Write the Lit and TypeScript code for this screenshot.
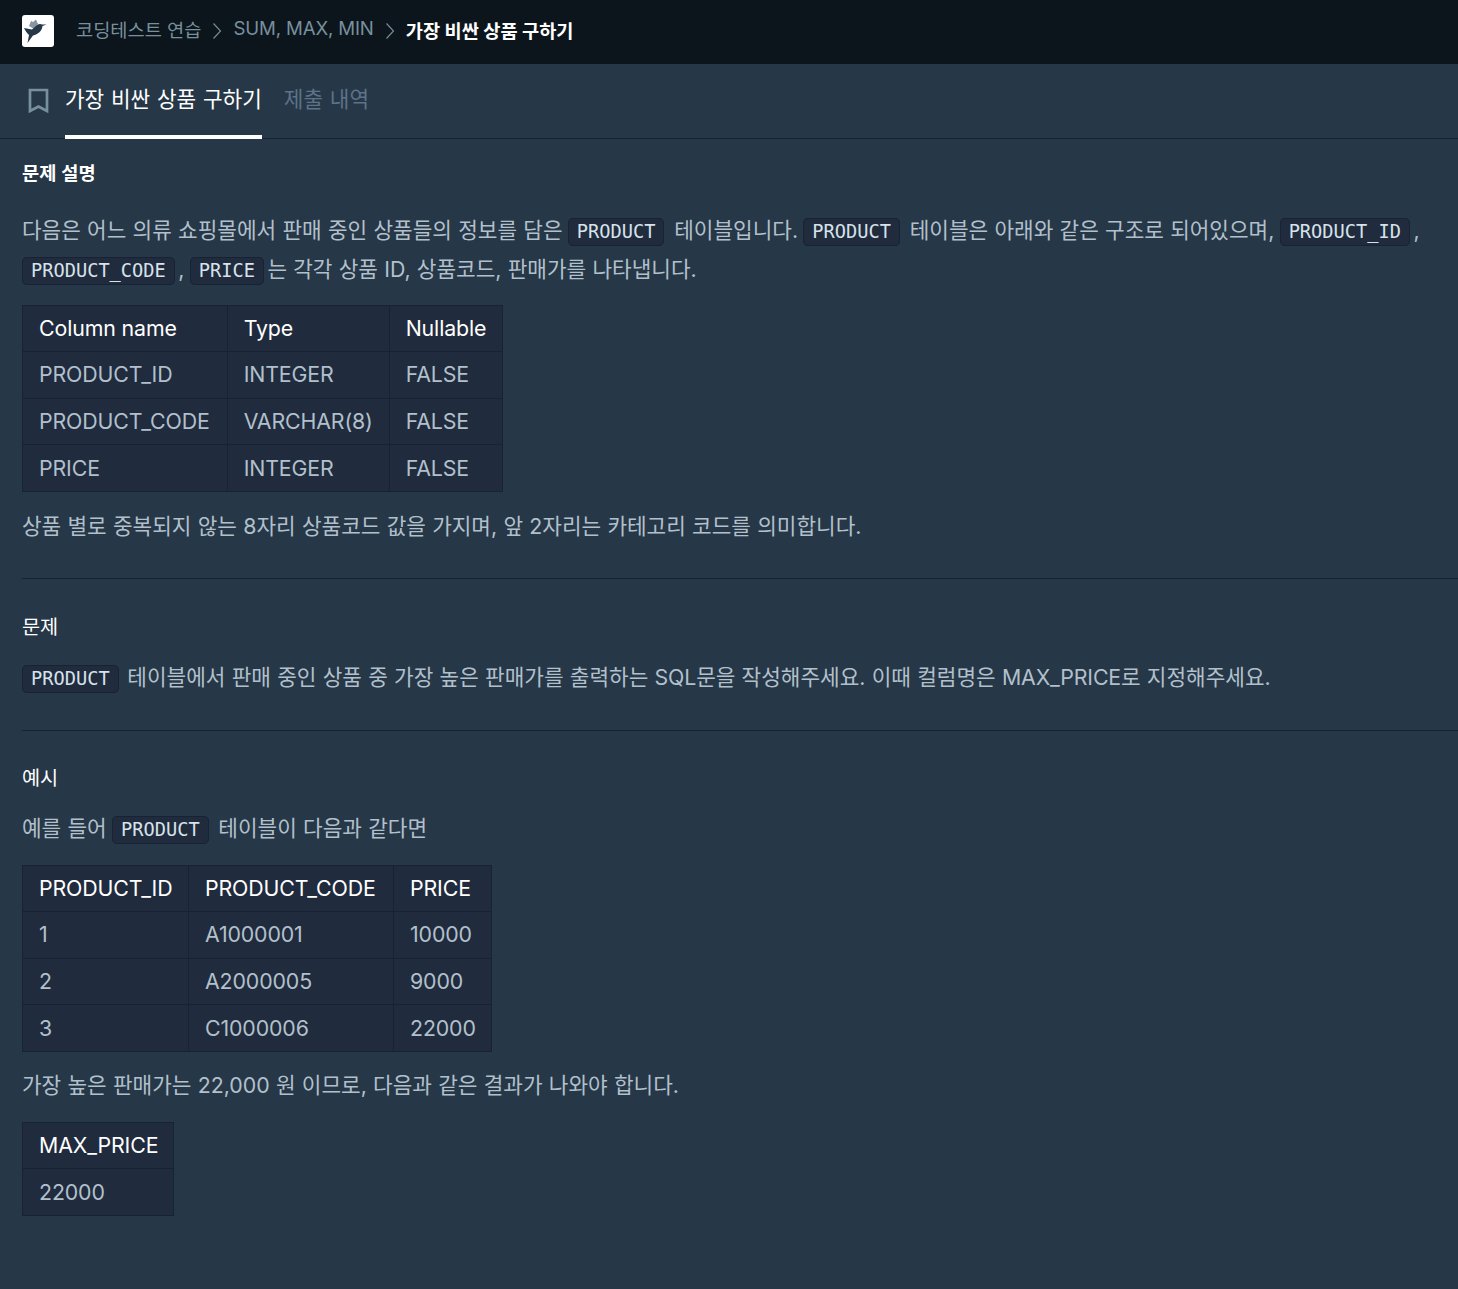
import { LitElement, html, css } from "lit";
import { customElement } from "lit/decorators.js";

const chevron = html`<svg class="chev" viewBox="0 0 10 18" width="10" height="18"><path d="M1.5 1.5 L8.5 9 L1.5 16.5" fill="none" stroke="#78909c" stroke-width="1.1"/></svg>`;

const table = (head: string[], rows: string[][], widths: number[]) => html`
  <table>
    <colgroup>${widths.map((w) => html`<col style="width:${w}px" />`)}</colgroup>
    <thead><tr>${head.map((h) => html`<th>${h}</th>`)}</tr></thead>
    <tbody>${rows.map((r) => html`<tr>${r.map((c) => html`<td>${c}</td>`)}</tr>`)}</tbody>
  </table>`;

@customElement("app-root")
export class AppRoot extends LitElement {
  static styles = css`
    :host { display: block; min-height: 1289px; background: #263747; color: #b2c0cc;
      font-family: Inter, "Noto Sans CJK KR", sans-serif; font-size: 21.33px; overflow: hidden; }
    .top { height: 64px; background: #0c151c; display: flex; align-items: center; padding-left: 22px; box-sizing: border-box; }
    .logo { width: 32px; height: 32px; background: #fff; border-radius: 3px; display: block; margin-right: 22px; margin-top: -2px; }
    .crumb { font-size: 18.67px; color: #78909c; margin-top: -8px; }
    .crumb.latin { letter-spacing: -0.15px; }
    .chev { margin: -2px 11px 0 11px; }
    .crumb.cur { color: #fff; font-weight: 700; margin-top: -6px; margin-left: 0; }
    .tabs { height: 75px; box-sizing: border-box; display: flex; border-bottom: 1px solid #172334; padding-left: 27px; }
    .book { margin-top: 24px; margin-right: 15px; }
    .tab { font-size: 21.33px; height: 75px; box-sizing: border-box; padding-top: 18px; word-spacing: 0.75px; }
    .tab.on { color: #fff; border-bottom: 4px solid #fff; margin-right: 22px; }
    .tab.off { color: #5c7388; }
    .desc { padding: 0 0 0 22px; }
    h6 { margin: 0; font-size: 18.67px; color: #fff; font-weight: 700; line-height: 26px; word-spacing: 0.5px; }
    h6.plain { font-weight: 400; font-size: 19.7px; }
    p { margin: 0; line-height: 39px; white-space: nowrap; word-spacing: 0.25px; }
    code { font-family: "DejaVu Sans Mono", monospace; font-size: 18.67px; line-height: 1; color: #d7e2eb; background: #202b3d; border: 1px solid #172334; border-radius: 5px; padding: 2px 8px 3px; margin: 0 3.5px 0 -1px; }
    code.first { margin-left: 0; }
    .p3 code { margin-right: 2.5px; }
    .l { letter-spacing: -0.16px; }
    table { border-collapse: collapse; table-layout: fixed; background: #202b3d; border: 1px solid #172334; width: min-content; }
    th, td { border: 1px solid #172334; padding: 0 16px; height: 46.67px; box-sizing: border-box; text-align: left; font-weight: 400; font-size: 21.33px; white-space: nowrap; letter-spacing: -0.12px; }
    th { color: #fff; height: 46px; }
    .t1 th, .t1 td, .t2 th, .t2 td { padding-bottom: 1px; }
    hr { border: 0; border-top: 1px solid #172334; margin: 0; }
    .s1 { margin-top: 22px; }
    .p1 { margin-top: 24px; }
    .t1 { margin-top: 16px; }
    .p2 { margin-top: 15px; }
    .r1 { margin-top: 32px; }
    .h2 { margin-top: 35px; }
    .p3 { margin-top: 18px; }
    .r2 { margin-top: 33px; }
    .h3 { margin-top: 34px; }
    .p4 { margin-top: 18px; }
    .t2 { margin-top: 17px; }
    .t3 { margin-top: 17px; }
    .p5 { margin-top: 14px; }
  `;
  render() {
    return html`
      <div class="top">
        <svg class="logo" viewBox="0 0 32 32">
          <path d="M7 11 L9 6 L11 7 L14 4.500 L16 9 L12 14 Z" fill="#8a95a3"/>
          <path d="M2 13 L10 14.500 L15 10 C17 8.500 19 8.700 20 9.500 L24.500 9.500 L20.500 11 C20 16 16 19.500 11 20.500 L5.500 28 L7 20 C5 18 3 15.500 2 13 Z" fill="#263747"/>
        </svg>
        <span class="crumb">코딩테스트 연습</span>${chevron}
        <span class="crumb latin">SUM, MAX, MIN</span>${chevron}
        <span class="crumb cur">가장 비싼 상품 구하기</span>
      </div>
      <div class="tabs">
        <svg class="book" width="23" height="25" viewBox="0 0 23 25"><path d="M3 2 H20 V23 L11.500 18.500 L3 23 Z" fill="none" stroke="#78909c" stroke-width="2.700"/></svg>
        <div class="tab on">가장 비싼 상품 구하기</div>
        <div class="tab off">제출 내역</div>
      </div>
      <div class="desc">
        <h6 class="s1">문제 설명</h6>
        <p class="p1">다음은 어느 의류 쇼핑몰에서 판매 중인 상품들의 정보를 담은 <code>PRODUCT</code> 테이블입니다. <code>PRODUCT</code> 테이블은 아래와 같은 구조로 되어있으며, <code>PRODUCT_ID</code>,</p>
        <p><code class="first">PRODUCT_CODE</code>, <code>PRICE</code>는 각각 상품 ID, 상품코드, 판매가를 나타냅니다.</p>
        <div class="t1">${table(["Column name", "Type", "Nullable"], [["PRODUCT_ID", "INTEGER", "FALSE"], ["PRODUCT_CODE", "VARCHAR(8)", "FALSE"], ["PRICE", "INTEGER", "FALSE"]], [204.67, 162, 113.33])}</div>
        <p class="p2">상품 별로 중복되지 않는 8자리 상품코드 값을 가지며, 앞 2자리는 카테고리 코드를 의미합니다.</p>
        <hr class="r1" />
        <h6 class="plain h2">문제</h6>
        <p class="p3"><code class="first">PRODUCT</code> 테이블에서 판매 중인 상품 중 가장 높은 판매가를 출력하는 <span class="l">SQL</span>문을 작성해주세요. 이때 컬럼명은 <span class="l">MAX_PRICE</span>로 지정해주세요.</p>
        <hr class="r2" />
        <h6 class="plain h3">예시</h6>
        <p class="p4">예를 들어 <code>PRODUCT</code> 테이블이 다음과 같다면</p>
        <div class="t2">${table(["PRODUCT_ID", "PRODUCT_CODE", "PRICE"], [["1", "A1000001", "10000"], ["2", "A2000005", "9000"], ["3", "C1000006", "22000"]], [166, 205, 98])}</div>
        <p class="p5">가장 높은 판매가는 22,000 원 이므로, 다음과 같은 결과가 나와야 합니다.</p>
        <div class="t3">${table(["MAX_PRICE"], [["22000"]], [151])}</div>
      </div>`;
  }
}
